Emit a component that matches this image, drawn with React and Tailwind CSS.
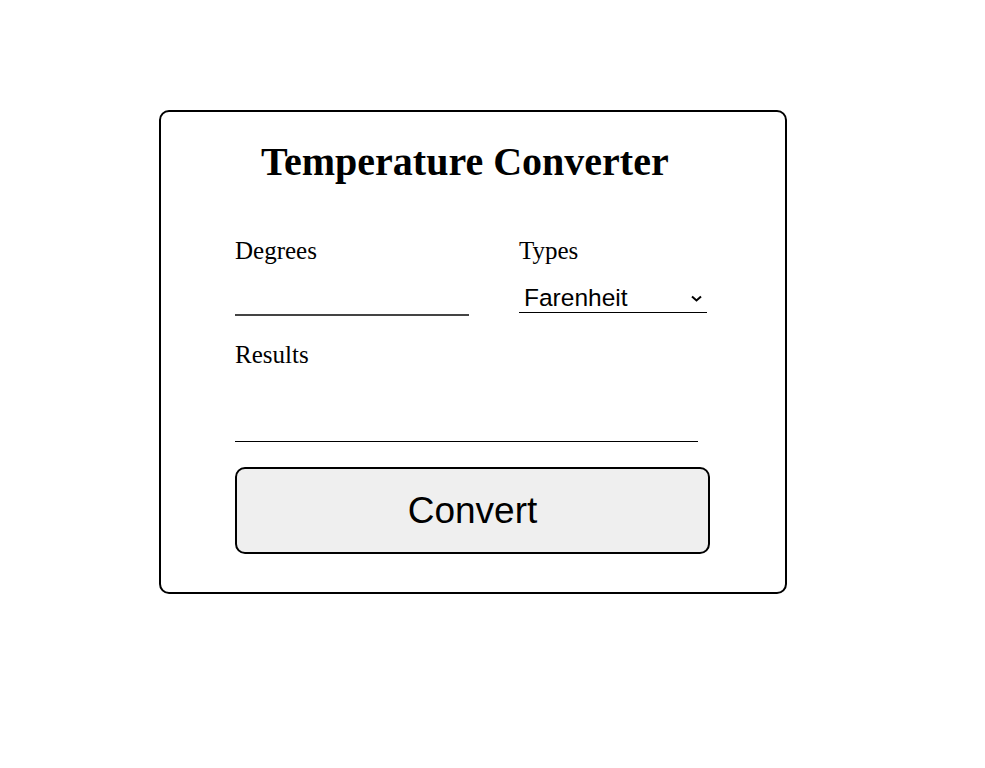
import React from "react";

export default function App() {
  return (
    <div className="w-[985px] h-[768px] bg-white overflow-hidden">
      <div className="ml-[159px] mt-[110px] w-[628px] h-[484px] border-2 border-black rounded-[10px] box-border pl-[74px]">
        <h1 className="mt-[27px] ml-[26px] font-['Liberation_Serif',serif] font-bold text-[40px] leading-[46px] text-black">
          Temperature Converter
        </h1>
        <div className="mt-[52px] flex gap-[50px]">
          <div className="w-[234px] flex flex-col">
            <label className="font-['Liberation_Serif',serif] text-[25px] leading-[28px] text-black">
              Degrees
            </label>
            <input
              type="text"
              className="mt-[21px] h-[30px] w-[234px] border-b-2 border-[#444] outline-none bg-transparent font-['Liberation_Sans',sans-serif] text-[24px]"
            />
          </div>
          <div className="w-[188px] flex flex-col">
            <label className="font-['Liberation_Serif',serif] text-[25px] leading-[28px] text-black">
              Types
            </label>
            <div className="mt-[18px] relative h-[30px] w-[188px] border-b border-black">
              <select className="appearance-none h-[29px] w-full bg-transparent pl-[5px] outline-none font-['Liberation_Sans',sans-serif] text-[24.5px] leading-[28px] text-black">
                <option>Farenheit</option>
                <option>Celsius</option>
              </select>
              <svg
                className="absolute left-[172px] top-[12px] pointer-events-none"
                width="11"
                height="7"
                viewBox="0 0 11 7"
              >
                <path d="M1 1.5 L5.5 5.5 L10 1.5" fill="none" stroke="black" strokeWidth="2" />
              </svg>
            </div>
          </div>
        </div>
        <label className="block mt-[25px] font-['Liberation_Serif',serif] text-[25px] leading-[28px] text-black">
          Results
        </label>
        <div className="h-[73px] w-[463px] border-b border-black"></div>
        <button className="mt-[25px] w-[475px] h-[87px] border-2 border-black rounded-[10px] bg-[#efefef] font-['Liberation_Sans',sans-serif] text-[37px] leading-[40px] text-black flex items-center justify-center">
          Convert
        </button>
      </div>
    </div>
  );
}
